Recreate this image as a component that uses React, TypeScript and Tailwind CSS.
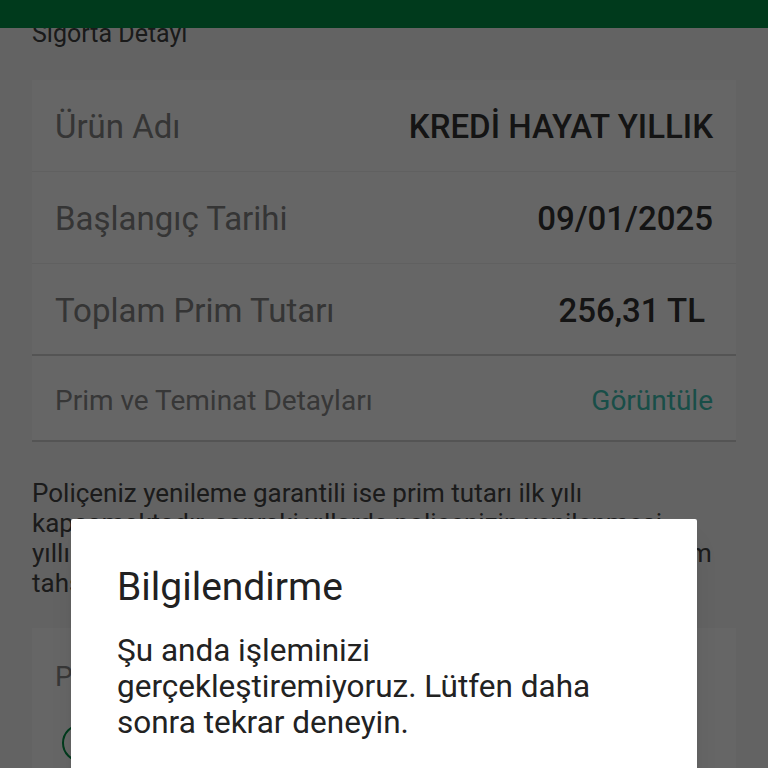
import React from 'react';

const font = { fontFamily: 'Roboto, "Noto Sans", sans-serif' };

const rows = [
  { label: 'Ürün Adı', value: 'KREDİ HAYAT YILLIK' },
  { label: 'Başlangıç Tarihi', value: '09/01/2025' },
  { label: 'Toplam Prim Tutarı', value: '256,31 TL' },
];

const noteLines = [
  'Poliçeniz yenileme garantili ise prim tutarı ilk yılı',
  'kapsamaktadır, sonraki yıllarda poliçenizin yenilenmesi',
  'yıllık olarak güncel tarife üzerinden hesaplanacak olan prim',
  'tahsil edilecektir.',
];

export default function App() {
  return (
    <div className="relative h-[768px] w-[768px] overflow-hidden bg-[#f8f8f8]" style={font}>
      {/* Toolbar (scrolled content slides under it) */}
      <div className="absolute left-0 right-0 top-0 z-10 h-[28px] bg-[#009146]" />

      <div className="pt-[19px]">
        <h2 className="px-[32px] text-[25px] leading-[30px] text-[#424242]">Sigorta Detayı</h2>

        {/* Detail card */}
        <div className="mx-[32px] mt-[31px] bg-white">
          {rows.map((row, i) => (
            <div
              key={row.label}
              className={`flex h-[92px] items-center justify-between px-[23px] pt-[3px] ${
                i < rows.length - 1 ? 'border-b border-[#f0f0f0]' : 'border-b-2 border-[#d2d2d2]'
              }`}
            >
              <span className="text-[33px] text-[#858585]">{row.label}</span>
              <span className={`text-[33px] font-medium text-[#323232] ${i === 2 ? 'pr-[8px]' : ''}`}>
                {row.value}
              </span>
            </div>
          ))}
          <div className="flex h-[86px] items-center justify-between border-b-2 border-[#d2d2d2] px-[23px] pt-[6px]">
            <span className="text-[28px] text-[#8a8a8a]">Prim ve Teminat Detayları</span>
            <span className="text-[28px] text-[#3fc4b5]">Görüntüle</span>
          </div>
        </div>

        <p className="mt-[36px] px-[32px] text-[26px] leading-[30px] text-[#444444]">
          {noteLines.map(line => (
            <span key={line} className="block whitespace-nowrap">
              {line}
            </span>
          ))}
        </p>

        {/* Second card */}
        <div className="mx-[32px] mt-[30px] h-[200px] bg-white px-[23px] pt-[28px]">
          <span className="text-[28px] text-[#8a8a8a]">Poliçe Bilgileri</span>
          <div className="ml-[7px] mt-[26px] h-[38px] w-[38px] rounded-full border-2 border-[#009146]" />
        </div>
      </div>

      {/* Scrim */}
      <div className="absolute inset-0 z-20 bg-black/60" />

      {/* Dialog */}
      <div className="absolute left-[71px] top-[519px] z-30 h-[300px] w-[626px] rounded-[2px] bg-white px-[46px] pt-[46px] shadow-xl">
        <h3 className="text-[39px] leading-[44px] text-[#212121]">Bilgilendirme</h3>
        <p className="mt-[24px] text-[31.5px] leading-[36px] text-[#222222]">
          Şu anda işleminizi gerçekleştiremiyoruz. Lütfen daha sonra tekrar deneyin.
        </p>
      </div>
    </div>
  );
}
